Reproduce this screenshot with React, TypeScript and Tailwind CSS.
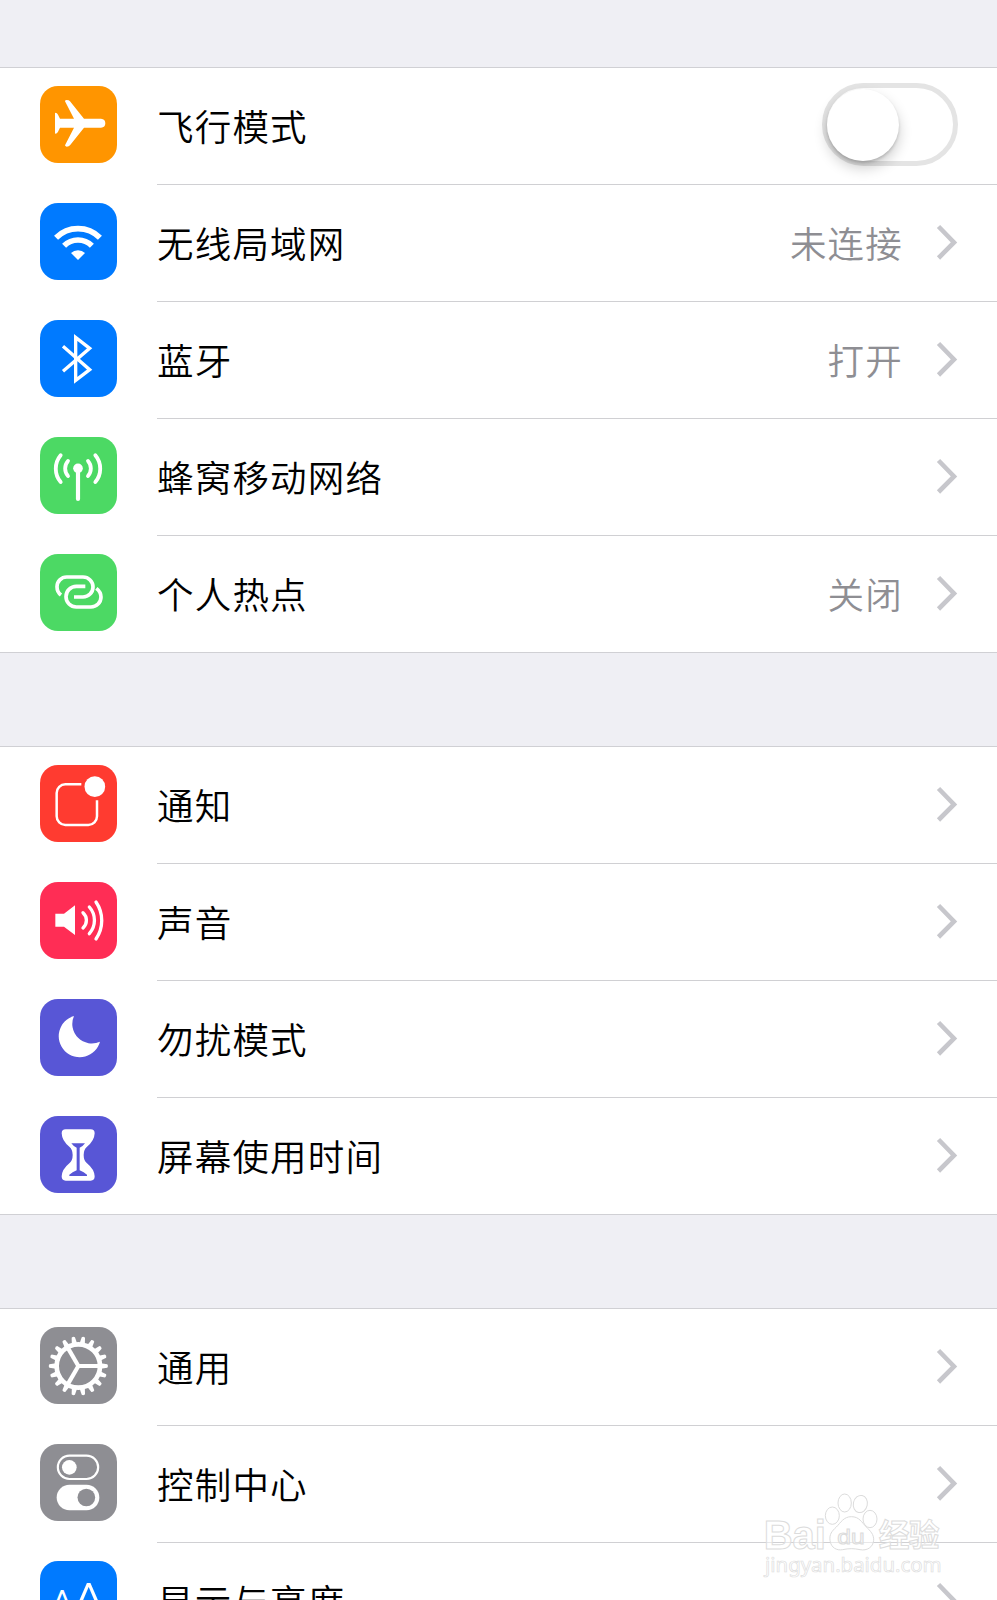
import React from "react";

type RowData = {
  label: string;
  value?: string;
  tile: string;
  icon: React.ReactNode;
  toggle?: boolean;
};

const line = {
  fill: "none",
  stroke: "#fff",
  strokeLinecap: "round" as const,
};

const Airplane = (
  <path
    fill="#fff"
    d="M46 80Q53 80 55 86L61 98H103L76 46Q76 42 81 42Q88 42 91 46L133 98H184Q197 99 197 111.500Q197 124 184 125H133L91 178Q88 182 81 182Q76 181 76 178L103 125H61L55 137Q53 143 46 143Z"
  />
);

const Wifi = (
  <g fill="none" stroke="#fff">
    <path strokeWidth="17" d="M49.200 104.200A93 93 0 0 1 180.800 104.200" />
    <path strokeWidth="17" d="M73.300 128.300A59 59 0 0 1 156.700 128.300" />
    <path stroke="none" fill="#fff" d="M115 171L94 150A30 30 0 0 1 136 150Z" />
  </g>
);

const Bluetooth = (
  <path
    fill="none"
    stroke="#fff"
    strokeWidth="10"
    strokeMiterlimit="10"
    d="M70 79L150 149L108 181V52L150 85L70 154"
  />
);

const Antenna = (
  <g {...line} strokeWidth="11.500">
    <circle cx="115" cy="94" r="14.500" fill="#fff" stroke="none" />
    <path strokeWidth="12.500" d="M115 96V186" />
    <path d="M85 72A34 34 0 0 0 85 117M145 72A34 34 0 0 1 145 117" />
    <path d="M63 55A62 62 0 0 0 63 135M167 55A62 62 0 0 1 167 135" />
  </g>
);

const Hotspot = (
  <g fill="none" stroke="#fff" strokeWidth="11">
    <path d="M64 123Q52 114 52 98A29 29 0 0 1 81 69H130A30 30 0 0 1 130 129H103" />
    <path d="M137 97H110A31 31 0 0 0 110 159H154A30 30 0 0 0 184 129Q184 114 170 103" />
  </g>
);

const Notification = (
  <g {...line} strokeWidth="7.500">
    <path
      strokeLinecap="butt"
      d="M125 58H77A26 26 0 0 0 51 84V154A26 26 0 0 0 77 180H146A26 26 0 0 0 172 154V106"
    />
    <circle cx="165.500" cy="65" r="31" fill="#fff" stroke="none" />
  </g>
);

const Sound = (
  <g {...line} strokeWidth="10">
    <path fill="#fff" stroke="none" d="M47 95H73L106 70V159L73 134H47Z" />
    <path d="M130 92A31 31 0 0 1 130 138" />
    <path d="M149 75A60 60 0 0 1 149 155" />
    <path d="M169 60A98 98 0 0 1 169 171" />
  </g>
);

const Moon = (
  <path fill="#fff" d="M103 51A63 63 0 1 0 181 128A58.500 58.500 0 0 1 103 51Z" />
);

const Hourglass = (
  <path
    fill="#fff"
    fillRule="evenodd"
    d="M78 40H153Q165 40 165 52Q164 75 142 92Q132 100 132 117Q132 134 142 142Q164 160 165 181Q165 194 153 194H78Q66 194 66 181Q67 160 89 142Q99 134 99 117Q99 100 89 92Q67 75 66 52Q66 40 78 40ZM95 82Q101 91 111 95V163Q98 168 89 176V180H142V176Q133 168 120 163V95Q130 91 136 82Z"
  />
);

const teeth = Array.from({ length: 18 }, (_, i) => i * 20);

const Gear = (
  <g transform="translate(116 117)">
    <circle r="65" fill="none" stroke="#fff" strokeWidth="14" />
    {teeth.map((a) => (
      <path key={a} fill="#fff" d="M67 -8L87 -5Q91 0 87 5L67 8Z" transform={`rotate(${a})`} />
    ))}
    {[0, 120, 240].map((a) => (
      <path key={a} stroke="#fff" strokeWidth="12.500" d="M-2 0H62" transform={`rotate(${a})`} />
    ))}
  </g>
);

const Switches = (
  <g>
    <rect x="54.500" y="35" width="121" height="70" rx="35" fill="none" stroke="#fff" strokeWidth="6.500" />
    <circle cx="89" cy="70" r="22" fill="#fff" />
    <rect x="51" y="122" width="128" height="77" rx="38.500" fill="#fff" />
    <circle cx="140" cy="160.500" r="26.500" fill="#8e8e93" />
  </g>
);

const Letters = (
  <g fill="#fff" fontFamily="Roboto, Inter, sans-serif" fontWeight="300" textAnchor="middle">
    <text transform="translate(67 178) scale(1.080 1)" fontSize="125">A</text>
    <text transform="translate(147 178) scale(1.150 1)" fontSize="156">A</text>
  </g>
);

const groups: RowData[][] = [
  [
    { label: "飞行模式", tile: "bg-[#ff9500]", icon: Airplane, toggle: true },
    { label: "无线局域网", value: "未连接", tile: "bg-[#007aff]", icon: Wifi },
    { label: "蓝牙", value: "打开", tile: "bg-[#007aff]", icon: Bluetooth },
    { label: "蜂窝移动网络", tile: "bg-[#4cd964]", icon: Antenna },
    { label: "个人热点", value: "关闭", tile: "bg-[#4cd964]", icon: Hotspot },
  ],
  [
    { label: "通知", tile: "bg-[#ff3b30]", icon: Notification },
    { label: "声音", tile: "bg-[#ff2d55]", icon: Sound },
    { label: "勿扰模式", tile: "bg-[#5856d6]", icon: Moon },
    { label: "屏幕使用时间", tile: "bg-[#5856d6]", icon: Hourglass },
  ],
  [
    { label: "通用", tile: "bg-[#8e8e93]", icon: Gear },
    { label: "控制中心", tile: "bg-[#8e8e93]", icon: Switches },
    { label: "显示与亮度", tile: "bg-[#007aff]", icon: Letters },
  ],
];

function Toggle() {
  return (
    <div className="mt-[15px] mr-[39px] h-[83px] w-[136px] rounded-full border-[5px] border-[#e4e4e4] bg-white">
      <div className="mt-px h-[72px] w-[72px] rounded-full bg-white shadow-[0_7px_14px_rgba(0,0,0,0.2),0_2px_3px_rgba(0,0,0,0.16)]" />
    </div>
  );
}

function Chevron() {
  return (
    <svg className="mt-[39px] mr-[38px] ml-[33px] h-[36px] w-[23px]" viewBox="0 0 23 36">
      <path d="M2.500 2.500L18 18.500L2.500 34" fill="none" stroke="#c7c7cc" strokeWidth="4.600" />
    </svg>
  );
}

function Row({ row, last }: { row: RowData; last: boolean }) {
  return (
    <div className="flex h-[117px] items-start">
      <div className={`mt-[18px] ml-[40px] h-[77px] w-[77px] shrink-0 overflow-hidden rounded-[18px] ${row.tile}`}>
        <svg className="h-[77px] w-[77px]" viewBox="1 0 231 231">
          {row.icon}
        </svg>
      </div>
      <div
        className={`ml-[40px] flex h-[117px] flex-1 items-start border-b ${last ? "border-transparent" : "border-[#d0d0d3]"}`}
      >
        <span className="mt-[32px] flex-1 text-[36.500px] leading-[52px] font-[350] tracking-[1.200px] text-black">
          {row.label}
        </span>
        {row.value && (
          <span className="mt-[32px] text-[36.500px] leading-[52px] font-[350] tracking-[1.200px] text-[#8e8e93]">
            {row.value}
          </span>
        )}
        {row.toggle ? <Toggle /> : <Chevron />}
      </div>
    </div>
  );
}

function Watermark() {
  return (
    <svg className="absolute top-[1460px] left-[740px] h-[140px] w-[257px]" viewBox="0 0 771 420">
      <g fill="#fff" fillOpacity="0.5" stroke="#dcdcdc" strokeWidth="3">
        <ellipse cx="277" cy="167" rx="21" ry="26" />
        <ellipse cx="314" cy="129" rx="20" ry="27" />
        <ellipse cx="361" cy="132" rx="21" ry="26" transform="rotate(12 361 132)" />
        <ellipse cx="390" cy="177" rx="21" ry="26" />
        <path d="M334 170C311 170 302 188 289 201C275 214 268 223 270 241C273 265 292 272 308 269C327 265 341 265 360 269C381 273 399 262 401 241C402 223 391 213 379 201C365 187 358 170 334 170Z" />
        <g fontFamily="'Liberation Sans', 'Noto Sans CJK SC', sans-serif">
          <text x="71" y="266" fontSize="122" fontWeight="bold" textLength="187" lengthAdjust="spacingAndGlyphs">
            Bai
          </text>
          <text x="292" y="251" fontSize="61" textLength="82" lengthAdjust="spacingAndGlyphs">
            du
          </text>
          <text x="416" y="258" fontSize="92" fontWeight="bold" textLength="182" fontFamily="'Noto Sans CJK SC', sans-serif">
            经验
          </text>
          <text x="75" y="337" fontSize="61" strokeWidth="2" fontFamily="'Noto Sans', sans-serif" textLength="530" lengthAdjust="spacingAndGlyphs">
            jingyan.baidu.com
          </text>
        </g>
      </g>
    </svg>
  );
}

export default function App() {
  return (
    <div className="relative flex h-[1600px] w-[997px] flex-col gap-[93px] overflow-hidden bg-[#efeff4] pt-[67px] font-['Noto_Sans_CJK_SC',sans-serif]">
      {groups.map((rows, g) => (
        <section key={g} className="shrink-0 border-t border-[#d0d0d4] bg-white">
          {rows.map((row, i) => (
            <div key={row.label} className={i === rows.length - 1 ? "-mb-px h-[117px] border-b border-[#d0d0d4]" : ""}>
              <Row row={row} last={i === rows.length - 1} />
            </div>
          ))}
          <div className="h-px" />
        </section>
      ))}
      <Watermark />
    </div>
  );
}
